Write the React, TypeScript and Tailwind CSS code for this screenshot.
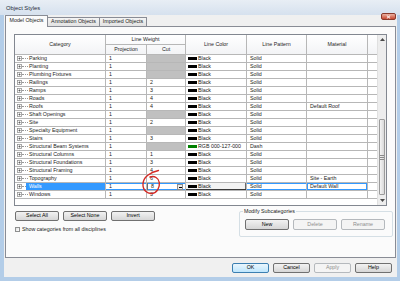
import React from 'react';

type Row = {
  name: string;
  proj: string;
  cut?: string;
  green?: boolean;
  pattern?: string;
  material?: string;
};

const rows: Row[] = [
  { name: 'Parking', proj: '1' },
  { name: 'Planting', proj: '1' },
  { name: 'Plumbing Fixtures', proj: '1' },
  { name: 'Railings', proj: '1', cut: '2' },
  { name: 'Ramps', proj: '1', cut: '3' },
  { name: 'Roads', proj: '1', cut: '4' },
  { name: 'Roofs', proj: '1', cut: '4', material: 'Default Roof' },
  { name: 'Shaft Openings', proj: '1' },
  { name: 'Site', proj: '1', cut: '2' },
  { name: 'Specialty Equipment', proj: '1' },
  { name: 'Stairs', proj: '1', cut: '3' },
  { name: 'Structural Beam Systems', proj: '1', green: true, pattern: 'Dash' },
  { name: 'Structural Columns', proj: '1', cut: '1' },
  { name: 'Structural Foundations', proj: '1', cut: '3' },
  { name: 'Structural Framing', proj: '1', cut: '4' },
  { name: 'Topography', proj: '1', cut: '6', material: 'Site - Earth' },
  { name: 'Walls', proj: '1', cut: '8', material: 'Default Wall' },
  { name: 'Windows', proj: '1', cut: '3' },
];

const PlusBox = () => (
  <svg width="5" height="5" viewBox="0 0 5 5" className="shrink-0">
    <rect x="0.5" y="0.5" width="4" height="4" fill="#fff" stroke="#939393" strokeWidth="0.8" />
    <path d="M1.4 2.5H3.6M2.5 1.4V3.6" stroke="#3a3a3a" strokeWidth="0.6" />
  </svg>
);

const Btn: React.FC<{ label: string; w: string; disabled?: boolean; primary?: boolean; h?: string }> = ({
  label,
  w,
  disabled,
  primary,
  h = 'h-[10px]',
}) => (
  <button
    className={`${w} ${h} rounded-[2px] border flex items-center justify-center leading-none text-[5.3px] ${
      disabled
        ? 'border-[#b5b9bd] bg-[#f4f4f4] text-[#8d8d8d]'
        : primary
          ? 'border-[#3c7fb1] bg-linear-to-b from-[#eaf6fd] to-[#bee6fd] text-black'
          : 'border-[#707070] bg-linear-to-b from-[#f2f2f2] to-[#d6d6d6] text-black'
    }`}
  >
    {label}
  </button>
);

const line = 'border-[#b7b7b7]';

export default function App() {
  return (
    <div className="relative w-[400px] h-[281px] overflow-hidden flex flex-col bg-[#b3cde8] font-['Liberation_Sans',Arial,sans-serif] text-[#1b1b1b]">
      {/* Title bar */}
      <div className="h-[15px] shrink-0 pl-[6px] pt-[6px] bg-linear-to-b from-[#e8eef5] to-[#d6e1ee]">
        <div className="text-[5.8px] leading-none text-[#1e2a38]">Object Styles</div>
      </div>

      {/* Dialog body */}
      <div className="ml-[4px] mr-[3px] h-[262px] bg-[#f0f0f0] px-[1px] flex flex-col">
        {/* Tabs */}
        <div className="relative z-10 -mb-px h-[12px] flex items-end text-[5.3px] leading-none">
          <div className="w-[43px] h-[12px] border-x border-t border-[#898c95] bg-[#fbfbfb] flex items-center justify-center pb-[1px] rounded-t-[1px]">
            Model Objects
          </div>
          <div className="w-[52px] h-[9px] mb-px border-t border-r border-[#898c95] bg-linear-to-b from-[#f4f4f4] to-[#e2e2e2] flex items-center justify-center">
            Annotation Objects
          </div>
          <div className="w-[47px] h-[9px] mb-px border-t border-r border-[#898c95] bg-linear-to-b from-[#f4f4f4] to-[#e2e2e2] flex items-center justify-center">
            Imported Objects
          </div>
        </div>

        {/* Panel */}
        <div className="h-[232px] border border-[#898c95] bg-[#fbfbfb] pl-[8px] pt-[7px] flex flex-col">
          {/* Table */}
          <div className="w-[373px] h-[172px] border border-[#828790] bg-white flex text-[5.3px] leading-none">
            <div className="w-[362px] flex flex-col">
              {/* Header */}
              <div className="grid grid-cols-[91px_41px_39px_61px_60px_61px_9px] grid-rows-[10px_10px] bg-linear-to-b from-white to-[#f2f3f5] text-[#262626]">
                <div className={`col-start-1 row-start-1 row-span-2 border-r border-b ${line} flex items-center justify-center`}>Category</div>
                <div className={`col-start-2 col-span-2 row-start-1 border-r border-b ${line} flex items-center justify-center`}>Line Weight</div>
                <div className={`col-start-4 row-start-1 row-span-2 border-r border-b ${line} flex items-center justify-center`}>Line Color</div>
                <div className={`col-start-5 row-start-1 row-span-2 border-r border-b ${line} flex items-center justify-center`}>Line Pattern</div>
                <div className={`col-start-6 row-start-1 row-span-2 border-r border-b ${line} flex items-center justify-center`}>Material</div>
                <div className={`col-start-7 row-start-1 row-span-2 border-b ${line}`} />
                <div className={`col-start-2 row-start-2 border-r border-b ${line} flex items-center justify-center`}>Projection</div>
                <div className={`col-start-3 row-start-2 border-r border-b ${line} flex items-center justify-center`}>Cut</div>
              </div>

              {/* Rows */}
              {rows.map((r) => {
                const sel = r.name === 'Walls';
                const selEdge = sel ? 'shadow-[inset_0_1px_0_#3399ff,inset_0_-1px_0_#3399ff]' : '';
                return (
                  <div key={r.name} className={`flex h-[8px] border-b ${line}`}>
                    <div className={`w-[91px] border-r ${line} flex items-center pl-[2px]`}>
                      <PlusBox />
                      {sel ? (
                        <>
                          <span className="w-[4px] border-t border-dotted border-[#9a9a9a]" />
                          <span className="flex-1 h-full bg-[#3399ff] text-white flex items-center pl-[3px]">Walls</span>
                        </>
                      ) : (
                        <>
                          <span className="w-[6px] border-t border-dotted border-[#9a9a9a]" />
                          <span className="ml-px whitespace-nowrap">{r.name}</span>
                        </>
                      )}
                    </div>
                    <div className={`w-[41px] border-r ${line} flex items-center pl-[3px] ${selEdge}`}>{r.proj}</div>
                    {r.cut === undefined ? (
                      <div className={`w-[39px] border-r ${line} bg-[#c0c0c0]`} />
                    ) : sel ? (
                      <div className={`w-[39px] border-r ${line} flex items-center pl-[3px] pr-[2px] border-l border-l-[#6d6d6d] ${selEdge}`}>
                        <span className="flex-1">8</span>
                        <span className="w-[6px] h-[6px] border border-[#8d8d8d] bg-[#ececec] flex items-end justify-center pb-px">
                          <span className="w-[3px] h-px bg-black" />
                        </span>
                      </div>
                    ) : (
                      <div className={`w-[39px] border-r ${line} flex items-center pl-[3px]`}>{r.cut}</div>
                    )}
                    <div
                      className={`w-[61px] border-r ${line} flex items-center pl-[2px] gap-px ${
                        sel ? 'bg-[#f3f3f3] shadow-[inset_0_-1px_0_#3a3a3a,inset_-1px_0_0_#6a6a6a]' : ''
                      }`}
                    >
                      <span className={`w-[9px] h-[3px] ${r.green ? 'bg-[#007f00]' : 'bg-black'}`} />
                      <span className="whitespace-nowrap">{r.green ? 'RGB 000-127-000' : 'Black'}</span>
                    </div>
                    <div className={`w-[60px] border-r ${line} flex items-center pl-[3px] ${selEdge}`}>{r.pattern ?? 'Solid'}</div>
                    <div
                      className={`w-[61px] border-r ${line} flex items-center pl-[3px] whitespace-nowrap ${
                        sel ? 'shadow-[inset_0_0_0_1px_#3399ff]' : ''
                      }`}
                    >
                      {r.material ?? ''}
                    </div>
                    <div className="w-[9px]" />
                  </div>
                );
              })}
              <div className="flex-1" />
            </div>

            {/* Scrollbar */}
            <div className="w-[9px] flex flex-col bg-[#ededed] border-l border-[#e0e0e0]">
              <div className="h-[9px] flex items-center justify-center">
                <svg width="5" height="3" viewBox="0 0 5 3">
                  <path d="M0 3L2.5 0L5 3Z" fill="#4a4a4a" />
                </svg>
              </div>
              <div className="flex-1 flex flex-col px-px">
                <div className="h-[75px]" />
                <div className="h-[76px] rounded-[1px] border border-[#9b9b9b] bg-linear-to-r from-[#f4f4f4] to-[#d9d9d9] flex flex-col items-center justify-center gap-px">
                  <span className="w-[4px] h-px bg-[#8a8a8a]" />
                  <span className="w-[4px] h-px bg-[#8a8a8a]" />
                  <span className="w-[4px] h-px bg-[#8a8a8a]" />
                </div>
              </div>
              <div className="h-[9px] flex items-center justify-center">
                <svg width="5" height="3" viewBox="0 0 5 3">
                  <path d="M0 0L2.5 3L5 0Z" fill="#4a4a4a" />
                </svg>
              </div>
            </div>
          </div>

          {/* Lower controls */}
          <div className="mt-[4px] pl-px pr-[2px] flex justify-between text-[5.3px] leading-none">
            <div className="flex flex-col">
              <div className="mt-[1px] flex gap-[4px]">
                <Btn label="Select All" w="w-[44px]" />
                <Btn label="Select None" w="w-[44px]" />
                <Btn label="Invert" w="w-[44px]" />
              </div>
              <div className="mt-[6px] flex items-center gap-[2px]">
                <span className="w-[5px] h-[5px] border border-[#8e8f8f] bg-linear-to-br from-[#e0e0e0] to-white" />
                <span>Show categories from all disciplines</span>
              </div>
            </div>
            <div className="relative mt-[1px] w-[154px] h-[26px] border border-[#d5dfe5] rounded-[2px] flex gap-[4px] pl-[5px] pt-[7px]">
              <span className="absolute left-[3px] -top-[3px] bg-[#fbfbfb] px-px">Modify Subcategories</span>
              <Btn label="New" w="w-[44px]" h="h-[11px]" />
              <Btn label="Delete" w="w-[44px]" h="h-[11px]" disabled />
              <Btn label="Rename" w="w-[44px]" h="h-[11px]" disabled />
            </div>
          </div>
        </div>

        {/* Dialog buttons */}
        <div className="pt-[5px] pr-[4px] flex justify-end gap-[4px]">
          <Btn label="OK" w="w-[37px]" primary />
          <Btn label="Cancel" w="w-[37px]" />
          <Btn label="Apply" w="w-[37px]" disabled />
          <Btn label="Help" w="w-[37px]" />
        </div>
      </div>

      {/* Close button */}
      <div className="absolute left-[381px] top-[13px] w-[15px] h-[7px] rounded-[2px] border border-[#8a3a2c] bg-linear-to-b from-[#eab1a2] to-[#c6442e] flex items-center justify-center">
        <svg width="5" height="4" viewBox="0 0 5 4">
          <path d="M0.8 0.5L4.2 3.5M4.2 0.5L0.8 3.5" stroke="#fff" strokeWidth="1" />
        </svg>
      </div>

      {/* Red annotation circle */}
      <svg className="absolute left-0 top-0 pointer-events-none" width="400" height="281" viewBox="0 0 400 281">
        <path
          d="M158.5 170.5C151 172 143.5 176.5 143 183.5C142.5 190.5 147.5 194 152 193.5C157 193 160 187.5 159.3 182.5C158.6 178 154.5 175.5 150 177"
          fill="none"
          stroke="#d42a24"
          strokeWidth="1.4"
          strokeLinecap="round"
        />
      </svg>
    </div>
  );
}
